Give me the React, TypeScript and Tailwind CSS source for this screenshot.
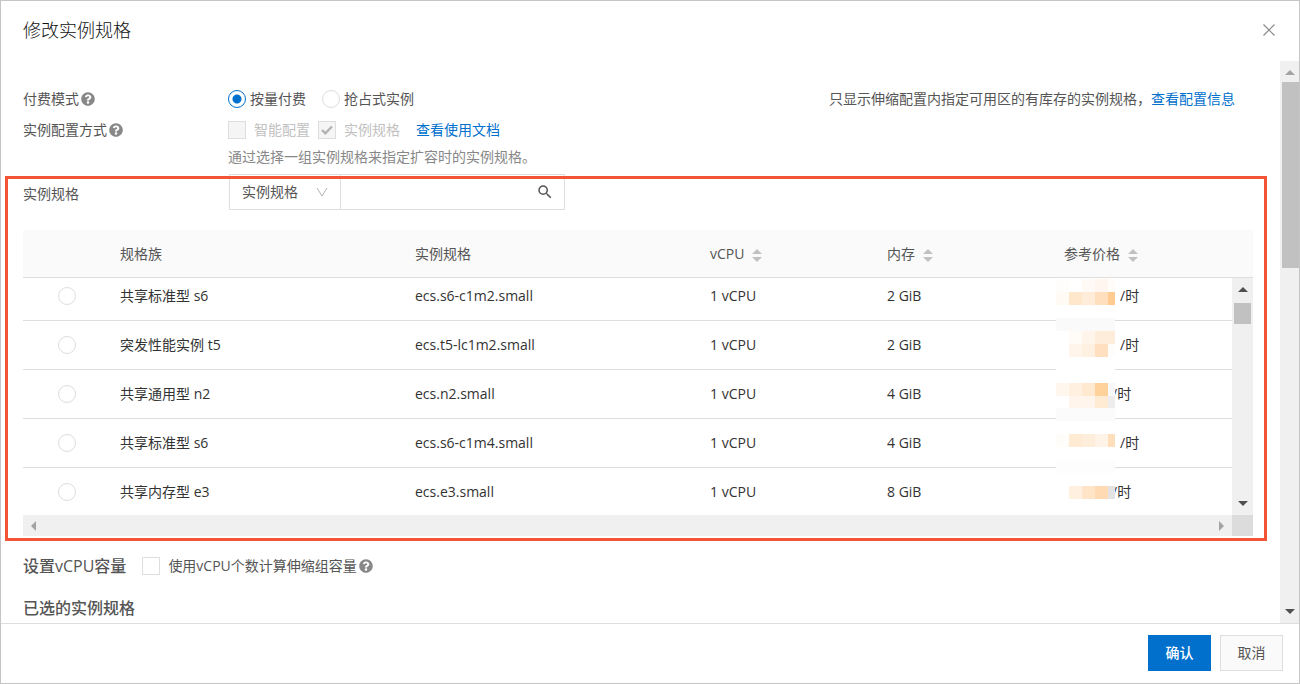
import React, { useEffect, useRef, useState } from 'react';
import { FaQuestionCircle } from 'react-icons/fa';
import { MdSearch } from 'react-icons/md';

interface Spec {
    id: string;
    family: string;
    type: string;
    vcpu: string;
    memory: string;
    shortPrice?: boolean;
}

const specs: Spec[] = [
    { id: 's6-2', family: '共享标准型 s6', type: 'ecs.s6-c1m2.small', vcpu: '1 vCPU', memory: '2 GiB' },
    { id: 't5-2', family: '突发性能实例 t5', type: 'ecs.t5-lc1m2.small', vcpu: '1 vCPU', memory: '2 GiB' },
    { id: 'n2-4', family: '共享通用型 n2', type: 'ecs.n2.small', vcpu: '1 vCPU', memory: '4 GiB', shortPrice: true },
    { id: 's6-4', family: '共享标准型 s6', type: 'ecs.s6-c1m4.small', vcpu: '1 vCPU', memory: '4 GiB' },
    { id: 'e3-8', family: '共享内存型 e3', type: 'ecs.e3.small', vcpu: '1 vCPU', memory: '8 GiB', shortPrice: true },
];

// x, y, width, height, fill
const priceBlocks: [number, number, number, number, string][] = [
    [0, 0, 13, 13, '#fefdfc'],
    [26, 0, 13, 13, '#fffaf5'],
    [39, 0, 13, 13, '#fff6ef'],
    [52, 0, 7, 13, '#fffcf9'],
    [0, 13, 13, 13, '#fffaf4'],
    [13, 13, 13, 13, '#ffe7cb'],
    [26, 13, 13, 13, '#ffedda'],
    [39, 13, 13, 13, '#ffdfbe'],
    [52, 13, 7, 13, '#ffcb90'],
    [0, 39, 59, 13, '#fafafa'],
    [13, 52, 13, 13, '#fffcf7'],
    [26, 52, 13, 13, '#fff5eb'],
    [39, 52, 20, 13, '#ffeddb'],
    [13, 65, 13, 13, '#fff5eb'],
    [26, 65, 13, 13, '#fff1e1'],
    [39, 65, 13, 13, '#ffdfbf'],
    [52, 65, 7, 13, '#fefdfc'],
    [0, 104, 13, 13, '#fff6ee'],
    [13, 104, 13, 13, '#fff0df'],
    [26, 104, 13, 13, '#ffe9d0'],
    [39, 104, 13, 13, '#ffd19b'],
    [52, 104, 7, 13, '#f8f8f8'],
    [13, 117, 26, 12, '#fff5ec'],
    [39, 117, 13, 12, '#ffead3'],
    [52, 117, 7, 12, '#ededed'],
    [0, 129, 59, 13, '#fbfbfb'],
    [0, 155, 13, 13, '#fffdfa'],
    [13, 155, 13, 13, '#ffead4'],
    [26, 155, 13, 13, '#ffeddc'],
    [39, 155, 13, 13, '#fff3e7'],
    [52, 155, 7, 13, '#ffdebb'],
    [0, 181, 59, 13, '#fdfdfd'],
    [13, 207, 13, 13, '#fff0e0'],
    [26, 207, 13, 13, '#ffe4c7'],
    [39, 207, 13, 13, '#ffdab2'],
    [52, 207, 7, 13, '#e3e3e3'],
];

const PriceMask: React.FC = () => (
    <svg className="absolute left-2 top-[7px] z-[1]" width="59" height="236" shapeRendering="crispEdges" aria-hidden="true">
        <rect width="59" height="236" fill="#fff" />
        {priceBlocks.map(([x, y, w, h, fill]) => (
            <rect key={`${x}-${y}`} x={x} y={y} width={w} height={h} fill={fill} />
        ))}
    </svg>
);

const arrowPaths = {
    up: 'M0 5 5 0l5 5z',
    down: 'M0 0h10L5 5z',
    left: 'M5 0v10L0 5z',
    right: 'M0 0v10l5-5z',
};

const Arrow: React.FC<{ dir: keyof typeof arrowPaths; className?: string }> = ({ dir, className }) => {
    const vertical = dir === 'up' || dir === 'down';
    return (
        <svg width={vertical ? 10 : 5} height={vertical ? 5 : 10} fill="currentColor" className={className} aria-hidden="true">
            <path d={arrowPaths[dir]} />
        </svg>
    );
};

const Help: React.FC = () => <FaQuestionCircle size={14} className="shrink-0 text-[#888]" />;

const Radio: React.FC<React.InputHTMLAttributes<HTMLInputElement>> = (props) => (
    <input
        type="radio"
        className="block size-[18px] shrink-0 appearance-none rounded-full border border-[#dedede] bg-white checked:border-[#0070cc] checked:bg-[radial-gradient(circle,#0070cc_0,#0070cc_4px,transparent_5px)]"
        {...props}
    />
);

const Checkbox: React.FC<React.InputHTMLAttributes<HTMLInputElement>> = (props) => (
    <span className="relative block size-[18px] shrink-0">
        <input
            type="checkbox"
            className="peer block size-[18px] appearance-none border border-[#dedede] bg-white disabled:bg-[#f5f5f5]"
            {...props}
        />
        <svg
            viewBox="0 0 18 18"
            className="pointer-events-none absolute inset-0 hidden fill-none stroke-[#b3b3b3] peer-checked:block"
            strokeWidth="2.4"
        >
            <path d="m4 9 3.3 3.3L14 5.5" />
        </svg>
    </span>
);

const SortHeader: React.FC<{ label: string }> = ({ label }) => (
    <button className="flex items-center gap-2">
        {label}
        <span className="flex flex-col gap-[3px] pt-1 text-[#c1c1c1]">
            <Arrow dir="up" />
            <Arrow dir="down" />
        </span>
    </button>
);

const App: React.FC = () => {
    const [payMode, setPayMode] = useState('payg');
    const [selected, setSelected] = useState('');
    const [useVcpu, setUseVcpu] = useState(false);
    const listRef = useRef<HTMLDivElement>(null);

    useEffect(() => {
        if (listRef.current) listRef.current.scrollTop = 6;
    }, []);

    return (
        <div className="flex h-screen flex-col overflow-hidden border border-[#c5c5c5] bg-white font-['Open_Sans','Noto_Sans_CJK_SC',sans-serif] text-sm text-[#555]">
            <header className="flex h-[60px] shrink-0 items-center justify-between pb-[3px] pl-[22px] pr-6">
                <h1 className="text-lg font-light leading-6 text-[#111]">修改实例规格</h1>
                <button aria-label="关闭">
                    <svg width="12" height="12" fill="none" stroke="#888" strokeWidth="1.2">
                        <path d="m.5.5 11 11M11.5.5l-11 11" />
                    </svg>
                </button>
            </header>

            <div className="flex min-h-0 flex-1">
                <main className="min-w-0 flex-1 overflow-hidden pl-[22px] pr-[27px] pt-[22px]">
                    <div className="flex h-[31px] items-center">
                        <div className="flex w-[205px] shrink-0 items-center gap-[2px]">
                            付费模式 <Help />
                        </div>
                        <div className="flex items-center gap-4">
                            <label className="flex items-center gap-1">
                                <Radio name="pay" checked={payMode === 'payg'} onChange={() => setPayMode('payg')} />
                                按量付费
                            </label>
                            <label className="flex items-center gap-1">
                                <Radio name="pay" checked={payMode === 'spot'} onChange={() => setPayMode('spot')} />
                                抢占式实例
                            </label>
                        </div>
                        <p className="ml-auto pr-[18px]">
                            只显示伸缩配置内指定可用区的有库存的实例规格，
                            <a href="#config" className="text-[#0070cc]">查看配置信息</a>
                        </p>
                    </div>

                    <div className="flex h-[31px] items-center">
                        <div className="flex w-[205px] shrink-0 items-center gap-[2px]">
                            实例配置方式 <Help />
                        </div>
                        <div className="flex items-center gap-2 text-[#c1c1c1]">
                            <label className="flex items-center gap-2">
                                <Checkbox disabled />
                                智能配置
                            </label>
                            <label className="flex items-center gap-2">
                                <Checkbox disabled checked readOnly />
                                实例规格
                            </label>
                            <a href="#docs" className="ml-2 text-[#0070cc]">查看使用文档</a>
                        </div>
                    </div>
                    <p className="ml-[205px] h-6 leading-6 text-[#888]">通过选择一组实例规格来指定扩容时的实例规格。</p>

                    <section className="relative mt-[5px]">
                        {/* highlight frame */}
                        <div className="pointer-events-none absolute -bottom-[5px] -left-[18px] -right-[14px] top-[2px] z-20 border-3 border-[#f25535]" />

                        <div className="flex items-center">
                            <label htmlFor="keyword" className="w-[206px] pt-1">实例规格</label>
                            <div className="flex h-9 w-[336px] border border-[#dedede]">
                                <div className="relative w-[111px] border-r border-[#dedede]">
                                    <select aria-label="搜索类型" className="h-full w-full appearance-none bg-transparent pl-3">
                                        <option>实例规格</option>
                                    </select>
                                    <svg className="pointer-events-none absolute right-3 top-3 fill-none stroke-[#b3b3b3]" width="12" height="10">
                                        <path d="m1 1 5 8 5-8" />
                                    </svg>
                                </div>
                                <input id="keyword" className="min-w-0 flex-1 px-3 outline-none" />
                                <button aria-label="搜索" className="px-[10px]">
                                    <MdSearch size={18} />
                                </button>
                            </div>
                        </div>

                        <div className="mt-5 flex">
                            <div ref={listRef} className="h-[285px] min-w-0 flex-1 overflow-hidden">
                                <table className="w-full table-fixed border-separate border-spacing-0 text-left">
                                    <colgroup>
                                        <col className="w-[81px]" />
                                        <col className="w-[295px]" />
                                        <col className="w-[295px]" />
                                        <col className="w-[177px]" />
                                        <col className="w-[177px]" />
                                        <col />
                                    </colgroup>
                                    <thead className="sticky top-0 z-10">
                                        <tr className="h-12 *:border-b *:border-[#dedede] *:bg-[#fafafa] *:px-4 *:font-normal">
                                            <th />
                                            <th>规格族</th>
                                            <th>实例规格</th>
                                            <th><SortHeader label="vCPU" /></th>
                                            <th><SortHeader label="内存" /></th>
                                            <th><SortHeader label="参考价格" /></th>
                                        </tr>
                                    </thead>
                                    <tbody className="text-[#333]">
                                        {specs.map((spec, index) => (
                                            <tr key={spec.id} className="h-[49px] *:border-b *:border-[#dedede] *:px-4">
                                                <td>
                                                    <div className="pl-[19px]">
                                                        <Radio
                                                            name="spec"
                                                            aria-label={spec.type}
                                                            checked={selected === spec.id}
                                                            onChange={() => setSelected(spec.id)}
                                                        />
                                                    </div>
                                                </td>
                                                <td>{spec.family}</td>
                                                <td>{spec.type}</td>
                                                <td>{spec.vcpu}</td>
                                                <td>{spec.memory}</td>
                                                <td className="relative">
                                                    {index === 0 && <PriceMask />}
                                                    <div className={spec.shortPrice ? 'pl-12' : 'pl-14'}>/时</div>
                                                </td>
                                            </tr>
                                        ))}
                                    </tbody>
                                </table>
                            </div>
                            <div className="flex w-[21px] shrink-0 flex-col">
                                <div className="h-12 border-b border-[#dedede] bg-[#fafafa]" />
                                <div className="flex flex-1 flex-col items-center bg-[#f0f0f0] py-[9px] text-[#505050]">
                                    <Arrow dir="up" />
                                    <div className="mt-[11px] h-[21px] w-[17px] bg-[#c1c1c1]" />
                                    <Arrow dir="down" className="mt-auto" />
                                </div>
                            </div>
                        </div>
                        <div className="flex h-[21px]">
                            <div className="flex flex-1 items-center justify-between bg-[#f0f0f0] px-2 text-[#a3a3a3]">
                                <Arrow dir="left" />
                                <Arrow dir="right" />
                            </div>
                            <div className="w-[21px] bg-[#dcdcdc]" />
                        </div>
                    </section>

                    <div className="mt-[9px] flex h-[42px] items-center gap-4">
                        <h2 className="text-base font-medium">设置vCPU容量</h2>
                        <div className="flex items-center gap-[2px]">
                            <label className="flex items-center gap-2">
                                <Checkbox checked={useVcpu} onChange={(e) => setUseVcpu(e.target.checked)} />
                                使用vCPU个数计算伸缩组容量
                            </label>
                            <Help />
                        </div>
                    </div>
                    <h2 className="h-[42px] text-base font-medium leading-[42px]">已选的实例规格</h2>
                </main>

                <div className="flex w-[19px] shrink-0 flex-col items-center bg-[#f0f0f0] py-[9px]">
                    <Arrow dir="up" className="text-[#a3a3a3]" />
                    <div className="mt-[7px] h-[186px] w-[17px] self-end bg-[#c1c1c1]" />
                    <Arrow dir="down" className="mt-auto text-[#505050]" />
                </div>
            </div>

            <footer className="flex h-[60px] shrink-0 items-center justify-end gap-[9px] border-t border-[#dedede] pb-[2px] pr-4">
                <button className="h-9 w-[63px] bg-[#0070cc] font-medium text-white">确认</button>
                <button className="h-9 w-[63px] border border-[#dedede] bg-[#fafafa]">取消</button>
            </footer>
        </div>
    );
};

export default App;
